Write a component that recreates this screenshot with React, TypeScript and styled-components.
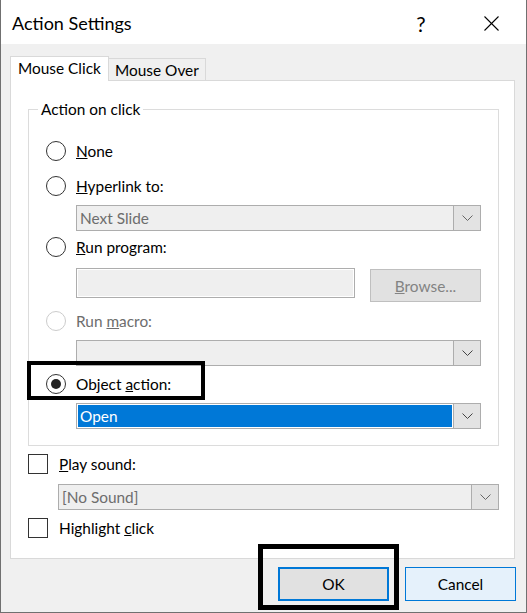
import React from 'react';
import styled, { createGlobalStyle } from 'styled-components';

const Global = createGlobalStyle`
  html, body { margin: 0; padding: 0; background: #ffffff; }
  body { font-family: Lato, "Liberation Sans", sans-serif; }
`;

const Window = styled.div`
  position: relative;
  width: 527px;
  height: 613px;
  box-sizing: border-box;
  border: 1px solid #707070;
  border-top: none;
  display: flex;
  flex-direction: column;
  background: #f0f0f0;
  font-family: Lato, "Liberation Sans", sans-serif;
  font-size: 15.4px;
  color: #000;
`;

const TitleBar = styled.div`
  height: 44px;
  flex: none;
  background: #ffffff;
  display: flex;
  align-items: center;
  padding-left: 11px;
`;

const Title = styled.div`
  flex: 1;
  font-size: 18px;
  line-height: 22px;
  margin-top: 2px;
`;

const TitleButton = styled.div`
  width: 70px;
  height: 44px;
  display: flex;
  align-items: center;
  justify-content: center;
  font-size: 21px;
  font-weight: 400;
  padding-top: 2px;
  box-sizing: border-box;
`;

const Body = styled.div`
  flex: 1;
  display: flex;
  flex-direction: column;
  padding: 12px 10px 11px 9px;
  min-height: 0;
`;

const TabRow = styled.div`
  display: flex;
  align-items: flex-end;
  height: 24px;
  flex: none;
`;

const Tab = styled.div<{ $active?: boolean }>`
  position: relative;
  z-index: ${p => (p.$active ? 1 : 0)};
  box-sizing: border-box;
  height: ${p => (p.$active ? 25 : 22)}px;
  margin-bottom: ${p => (p.$active ? -1 : 0)}px;
  width: ${p => (p.$active ? 99 : 97)}px;
  padding: 1px 0 0 ${p => (p.$active ? 7 : 6)}px;
  line-height: 20px;
  background: ${p => (p.$active ? '#ffffff' : '#f0f0f0')};
  border: 1px solid #d9d9d9;
  border-bottom: none;
  border-left: ${p => (p.$active ? '1px solid #d9d9d9' : 'none')};
  white-space: nowrap;
`;

const Panel = styled.div`
  flex: 1;
  margin-right: 1px;
  background: #ffffff;
  border: 1px solid #d9d9d9;
  padding: 18px 15px 0 17px;
  display: flex;
  flex-direction: column;
`;

const Group = styled.fieldset`
  margin: 0;
  border: 1px solid #dcdcdc;
  padding: 0 17px 16px 17px;
  min-width: 0;
  display: flex;
  flex-direction: column;
`;

const GroupLabel = styled.legend`
  margin-left: -8px;
  padding: 0 3px;
  line-height: 20px;
`;

const OptionRow = styled.div<{ $mt: number; $disabled?: boolean }>`
  display: flex;
  align-items: center;
  gap: 10px;
  height: 20px;
  line-height: 20px;
  margin-top: ${p => p.$mt}px;
  color: ${p => (p.$disabled ? '#6d6d6d' : '#000000')};
  white-space: nowrap;
`;

const CheckRow = styled(OptionRow)`
  gap: 11px;
`;

const Radio = styled.span<{ $checked?: boolean; $disabled?: boolean }>`
  width: 20px;
  height: 20px;
  box-sizing: border-box;
  flex: none;
  border-radius: 50%;
  border: 1px solid ${p => (p.$disabled ? '#cccccc' : '#333333')};
  background: #ffffff;
  display: flex;
  align-items: center;
  justify-content: center;
  &::after {
    content: '';
    display: ${p => (p.$checked ? 'block' : 'none')};
    width: 10px;
    height: 10px;
    border-radius: 50%;
    background: #222222;
  }
`;

const CheckBox = styled.span`
  width: 20px;
  height: 20px;
  box-sizing: border-box;
  flex: none;
  border: 1px solid #333333;
  background: #ffffff;
`;

const Combo = styled.div<{ $mt: number; $indent: number }>`
  display: flex;
  height: 26px;
  box-sizing: border-box;
  margin-top: ${p => p.$mt}px;
  margin-left: ${p => p.$indent}px;
  border: 1px solid #adadad;
  flex: none;
`;

const ComboField = styled.div<{ $selected?: boolean }>`
  flex: 1;
  min-width: 0;
  display: flex;
  padding: ${p => (p.$selected ? '1px' : '0')};
  background: ${p => (p.$selected ? '#ffffff' : '#efefef')};
  color: #6d6d6d;
  line-height: 24px;
  padding-left: ${p => (p.$selected ? 1 : 3)}px;
`;

const Highlighted = styled.span`
  flex: 1;
  background: #0078d7;
  color: #ffffff;
  line-height: 22px;
  padding-left: 2px;
`;

const ComboButton = styled.div`
  width: 27px;
  box-sizing: border-box;
  flex: none;
  border-left: 1px solid #adadad;
  background: #e3e3e3;
  display: flex;
  align-items: center;
  justify-content: center;
`;

const FieldRow = styled.div<{ $mt: number; $indent: number }>`
  display: flex;
  align-items: flex-start;
  gap: 15px;
  margin-top: ${p => p.$mt}px;
  margin-left: ${p => p.$indent}px;
  height: 34px;
`;

const TextField = styled.div`
  flex: 1;
  height: 30px;
  box-sizing: border-box;
  border: 1px solid #adadad;
  background: #efefef;
  box-shadow: inset 0 0 0 1px #ffffff;
`;

const SideButton = styled.div`
  width: 111px;
  height: 33px;
  margin-top: 1px;
  box-sizing: border-box;
  border: 1px solid #bfbfbf;
  background: #e1e1e1;
  color: #838383;
  display: flex;
  align-items: center;
  justify-content: center;
`;

const ButtonRow = styled.div`
  display: flex;
  justify-content: flex-end;
  gap: 16px;
  margin-top: 8px;
  flex: none;
`;

const DialogButton = styled.button<{ $default?: boolean }>`
  width: 111px;
  height: 34px;
  box-sizing: border-box;
  padding: 0;
  font: inherit;
  color: #000000;
  background: ${p => (p.$default ? '#e1e1e1' : '#e5f1fb')};
  border: ${p => (p.$default ? 2 : 1)}px solid #0078d7;
`;

const Callout = styled.div<{ $w: number }>`
  position: absolute;
  box-sizing: border-box;
  border: ${p => p.$w}px solid #000000;
  pointer-events: none;
`;

const Chevron = ({ color = '#444444' }: { color?: string }) => (
  <svg width="11" height="6" viewBox="0 0 11 6">
    <polyline points="0.5,0.5 5.5,5.5 10.5,0.5" fill="none" stroke={color} strokeWidth="1" />
  </svg>
);

const CloseIcon = () => (
  <svg width="15" height="15" viewBox="0 0 15 15">
    <line x1="0.5" y1="0.5" x2="14.5" y2="14.5" stroke="#000" strokeWidth="1.1" />
    <line x1="14.5" y1="0.5" x2="0.5" y2="14.5" stroke="#000" strokeWidth="1.1" />
  </svg>
);

export default function App() {
  return (
    <>
      <Global />
      <Window>
        <TitleBar>
          <Title>Action Settings</Title>
          <TitleButton>?</TitleButton>
          <TitleButton>
            <CloseIcon />
          </TitleButton>
        </TitleBar>
        <Body>
          <TabRow>
            <Tab $active>Mouse Click</Tab>
            <Tab>Mouse Over</Tab>
          </TabRow>
          <Panel>
            <Group>
              <GroupLabel>Action on click</GroupLabel>
              <OptionRow $mt={22}>
                <Radio />
                <span><u>N</u>one</span>
              </OptionRow>
              <OptionRow $mt={15}>
                <Radio />
                <span><u>H</u>yperlink to:</span>
              </OptionRow>
              <Combo $mt={9} $indent={30}>
                <ComboField>Next Slide</ComboField>
                <ComboButton><Chevron color="#666666" /></ComboButton>
              </Combo>
              <OptionRow $mt={6}>
                <Radio />
                <span><u>R</u>un program:</span>
              </OptionRow>
              <FieldRow $mt={11} $indent={30}>
                <TextField />
                <SideButton><span><u>B</u>rowse...</span></SideButton>
              </FieldRow>
              <OptionRow $mt={9} $disabled>
                <Radio $disabled />
                <span>Run <u>m</u>acro:</span>
              </OptionRow>
              <Combo $mt={9} $indent={30}>
                <ComboField />
                <ComboButton><Chevron /></ComboButton>
              </Combo>
              <OptionRow $mt={8}>
                <Radio $checked />
                <span>Object <u>a</u>ction:</span>
              </OptionRow>
              <Combo $mt={9} $indent={30}>
                <ComboField $selected>
                  <Highlighted>Open</Highlighted>
                </ComboField>
                <ComboButton><Chevron /></ComboButton>
              </Combo>
            </Group>
            <CheckRow $mt={8}>
              <CheckBox />
              <span><u>P</u>lay sound:</span>
            </CheckRow>
            <Combo $mt={10} $indent={30}>
              <ComboField>[No Sound]</ComboField>
              <ComboButton><Chevron color="#666666" /></ComboButton>
            </Combo>
            <CheckRow $mt={8}>
              <CheckBox />
              <span>Highlight <u>c</u>lick</span>
            </CheckRow>
          </Panel>
          <ButtonRow>
            <DialogButton $default>OK</DialogButton>
            <DialogButton>Cancel</DialogButton>
          </ButtonRow>
        </Body>
        <Callout $w={4} style={{ left: 26, top: 361, width: 178, height: 39 }} />
        <Callout $w={5} style={{ left: 257, top: 544, width: 141, height: 66 }} />
      </Window>
    </>
  );
}
